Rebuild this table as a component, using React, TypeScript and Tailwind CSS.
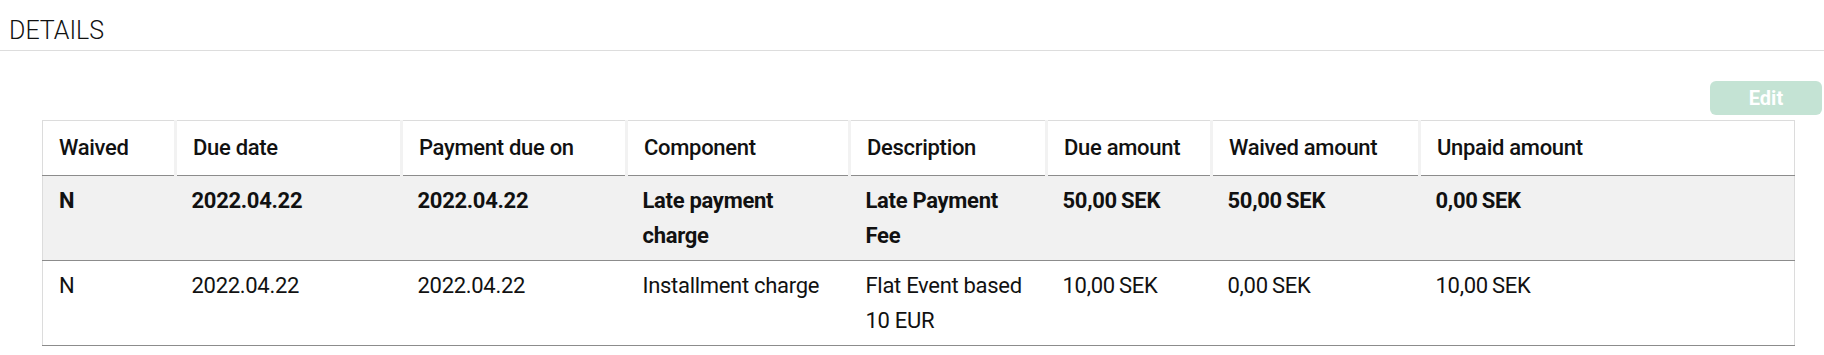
import React from "react";

const cols = [133, 226, 225, 223, 197, 165, 208, 375];
const headers = [
  "Waived",
  "Due date",
  "Payment due on",
  "Component",
  "Description",
  "Due amount",
  "Waived amount",
  "Unpaid amount",
];

const rows = [
  {
    bold: true,
    bg: "bg-[#f1f1f1]",
    cells: [
      "N",
      "2022.04.22",
      "2022.04.22",
      "Late payment charge",
      "Late Payment Fee",
      "50,00\u2009SEK",
      "50,00\u2009SEK",
      "0,00\u2009SEK",
    ],
  },
  {
    bold: false,
    bg: "bg-white",
    cells: [
      "N",
      "2022.04.22",
      "2022.04.22",
      "Installment charge",
      "Flat Event based 10 EUR",
      "10,00\u2009SEK",
      "0,00\u2009SEK",
      "10,00\u2009SEK",
    ],
  },
];

export default function App() {
  return (
    <div
      className="w-[1824px] h-[355px] bg-white text-[#111111] overflow-hidden"
      style={{ fontFamily: "Roboto, 'Liberation Sans', sans-serif" }}
    >
      <div className="h-[51px] border-b border-[#dddddd] pl-[9px] pt-[16px]">
        <div className="text-[25px] leading-[30px] font-light">DETAILS</div>
      </div>
      <div className="pl-[42px] pr-[2px] pt-[30px]">
        <div className="flex justify-end">
          <button className="w-[112px] h-[34px] rounded-[6px] bg-[#c4e3d4] text-white font-bold text-[20px] leading-[34px]">
            Edit
          </button>
        </div>
        <table className="mt-[5px] table-fixed border-collapse border border-[#dcdcdc] w-[1752px] text-[22px] tracking-[-0.3px]">
          <colgroup>
            {cols.map((w, i) => (
              <col key={i} style={{ width: w }} />
            ))}
          </colgroup>
          <thead>
            <tr className="border-b border-[#8c8c8c]">
              {headers.map((h, i) => (
                <th
                  key={i}
                  className={
                    "text-left align-top font-medium px-[16px] py-[10px] leading-[34px] whitespace-nowrap " +
                    (i < headers.length - 1 ? "border-r-[3px] border-r-[#f2f2f2]" : "")
                  }
                >
                  {h}
                </th>
              ))}
            </tr>
          </thead>
          <tbody>
            {rows.map((r, ri) => (
              <tr key={ri} className={"border-b border-[#8c8c8c] " + r.bg}>
                {r.cells.map((c, ci) => (
                  <td
                    key={ci}
                    className={
                      "align-top px-[16px] pt-[7px] pb-[7px] leading-[35px] " +
                      (r.bold ? "font-bold" : "font-normal")
                    }
                  >
                    {c}
                  </td>
                ))}
              </tr>
            ))}
          </tbody>
        </table>
      </div>
    </div>
  );
}
